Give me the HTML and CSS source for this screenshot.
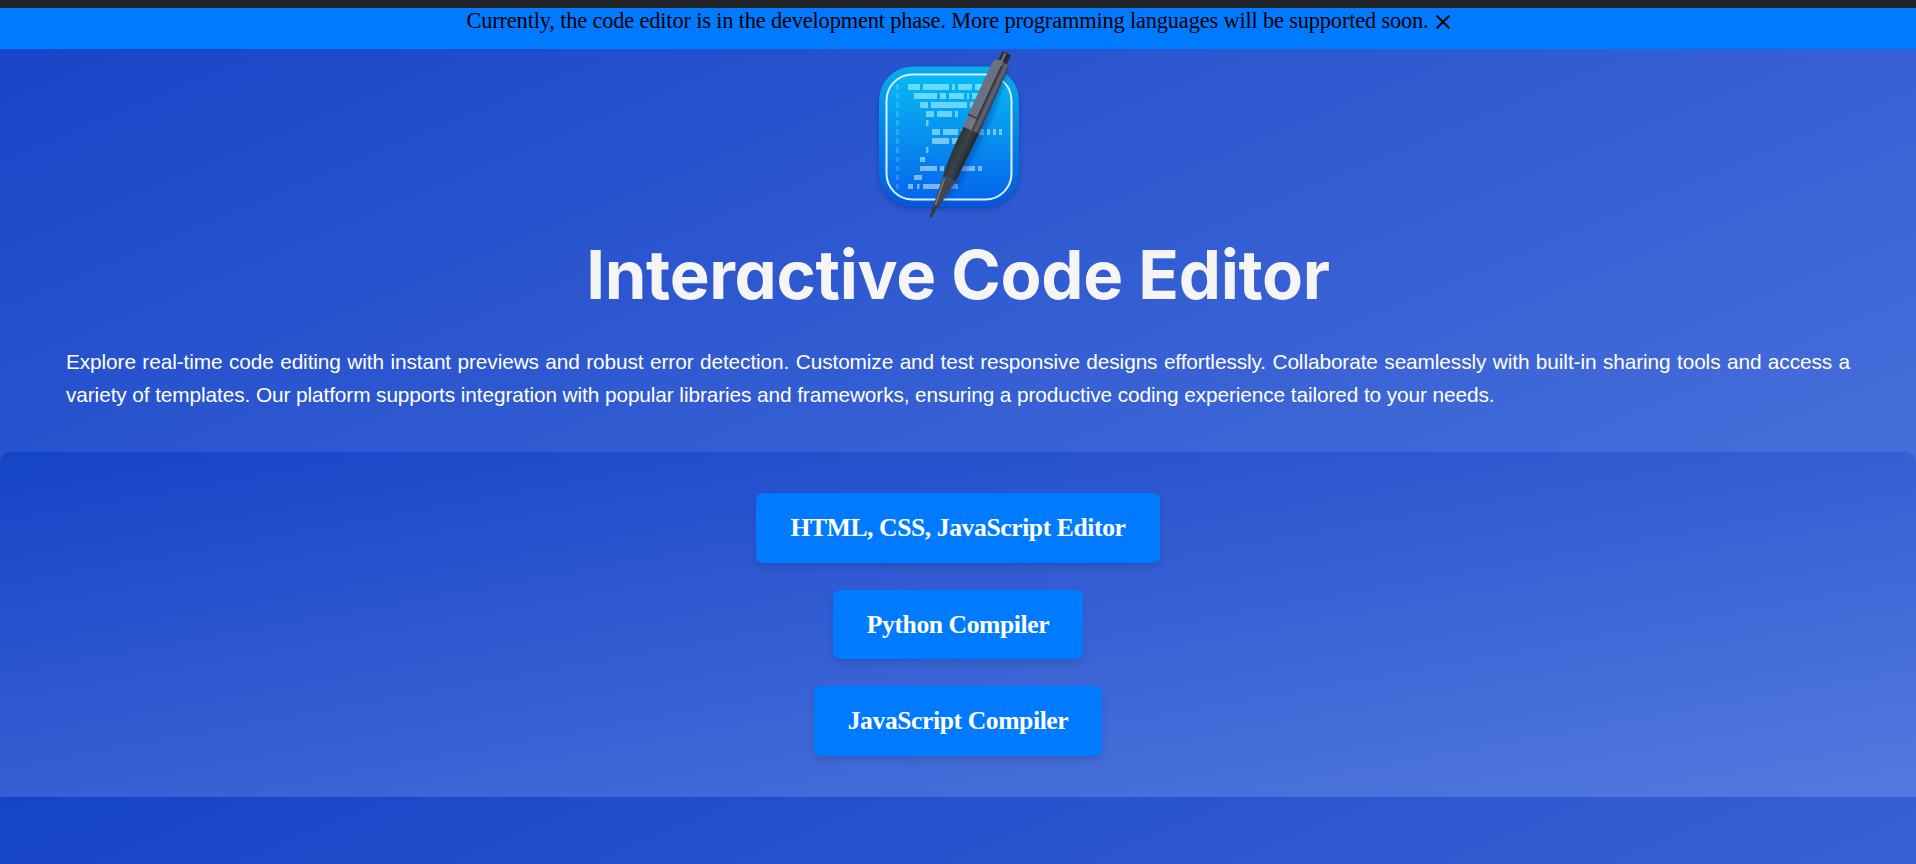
FILE: index.html
```html
<!DOCTYPE html>
<html lang="en">
<head>
<meta charset="utf-8">
<title>Interactive Code Editor</title>
<link rel="stylesheet" href="styles.css">
</head>
<body>
<div class="topbar"></div>
<div class="notice">
  <span class="notice-text">Currently, the code editor is in the development phase. More programming languages will be supported soon.</span>
  <svg class="close" viewBox="0 0 14 14"><path d="M.6.6 13.4 13.4M13.4.6.6 13.4" stroke="#000" stroke-width="2" fill="none"/></svg>
</div>
<header class="hero">
  <svg class="logo" viewBox="0 0 180 190">
    <defs>
      <linearGradient id="tile" x1="0" y1="0" x2="0" y2="1"><stop offset="0" stop-color="#05b9f2"/><stop offset=".45" stop-color="#0795ef"/><stop offset="1" stop-color="#0565ed"/></linearGradient>
      <linearGradient id="rim" x1="0" y1="0" x2="0" y2="1"><stop offset="0" stop-color="#07aeec"/><stop offset="1" stop-color="#0457dc"/></linearGradient>
      <linearGradient id="lines" gradientUnits="userSpaceOnUse" x1="0" y1="44" x2="0" y2="150"><stop offset="0" stop-color="#63defc"/><stop offset="1" stop-color="#78b5fa"/></linearGradient>
      <linearGradient id="metal" x1="0" y1="0" x2="1" y2="0"><stop offset="0" stop-color="#6d6f7e"/><stop offset=".45" stop-color="#777989"/><stop offset=".55" stop-color="#41434e"/><stop offset=".75" stop-color="#656779"/><stop offset="1" stop-color="#31323d"/></linearGradient>
      <linearGradient id="grip" x1="0" y1="0" x2="1" y2="0"><stop offset="0" stop-color="#2b3339"/><stop offset=".5" stop-color="#3c4348"/><stop offset="1" stop-color="#20262d"/></linearGradient>
      <filter id="soft" x="-20%" y="-20%" width="140%" height="140%"><feGaussianBlur stdDeviation="2"/></filter>
      <filter id="fine"><feGaussianBlur stdDeviation=".6"/></filter>
    </defs>
    <rect x="19" y="29" width="140" height="140" rx="34" fill="#173591" opacity=".55" filter="url(#soft)"/>
    <rect x="19" y="26.500" width="140" height="140.500" rx="34" fill="url(#rim)"/>
    <rect x="26.500" y="34.500" width="125" height="125" rx="26" fill="url(#tile)" stroke="#d9f1ff" stroke-width="2"/>
    <g fill="url(#lines)" filter="url(#fine)">
      <path d="M48 44h12v6H48zM63 44h26v6H63zM92 44h3v6h-3zM98 44h14v6H98zM115 44h10v6h-10z"/>
      <path d="M54 53h23v6H54zM80 53h6v6h-6zM89 53h15v6H89zM107 53h2v6h-2zM112 53h10v6h-10z"/>
      <path d="M60 62h8v6h-8zM71 62h36v6H71zM110 62h8v6h-8z"/>
      <path d="M66 71h8v6h-8zM77 71h15v6H77zM95 71h3v6h-3zM66 80h2.500v6H66z"/>
      <path d="M72 89h8v6h-8zM83 89h15v6H83zM101 89h20v6h-20zM120 89h4v6h-4zM127 89h3v6h-3zM133 89h3v6h-3zM139 89h3v6h-3z"/>
      <path d="M72 98h17v6H72zM92 98h8v6h-8zM66 107h2.500v6H66zM60 117h5v5h-5z"/>
      <path d="M60 126h17v5H60zM80 126h4v5h-4zM87 126h28v5H87zM118 126h4v5h-4zM54 135h8v5h-8z"/>
      <path d="M48 144h5v5h-5zM57 144h2.500v5H57zM63 144h20v5H63zM86 144h12v5H86z"/>
      <path opacity=".35" d="M36 44h3v6h-3zM36 53h3v6h-3zM36 62h3v6h-3zM36 71h3v6h-3zM36 80h3v6h-3zM36 89h3v6h-3zM36 98h3v6h-3zM36 107h3v6h-3zM36 117h3v5h-3zM36 126h3v5h-3zM36 135h3v5h-3zM36 144h3v5h-3z"/>
    </g>
    <path d="M149 30 130 82 100 145 78 166 88 138 132 40z" fill="#06389b" opacity=".4" filter="url(#soft)"/>
    <g transform="translate(147 12) rotate(24.900)">
      <rect x="-4.500" y="1" width="9.500" height="13" rx="2" fill="#292b32"/>
      <path d="M-1 2v11" stroke="#777a86" stroke-width="2"/>
      <path d="M-8 12Q0 8 8 13L9 88H-8z" fill="url(#metal)"/>
      <path d="M-9 14Q-4 8 1 12V73H-9z" fill="#6d7080"/>
      <path d="M-9 73H1V15" fill="none" stroke="#32343e" stroke-width="1.400"/>
      <path d="M-8 86H9L8 139H-6Q-9 118-8 86z" fill="url(#grip)"/>
      <path d="M-6 138Q1 142 8 138L3 171H-2z" fill="#42464c"/>
      <path d="M-3.500 141-.5 169" stroke="#73767b" stroke-width="1.600"/>
      <path d="M-2.500 169h5L1.500 182H-1z" fill="#373b44"/>
    </g>
  </svg>
  <h1 class="title">Interactive Code Editor</h1>
  <p class="intro">Explore real-time code editing with instant previews and robust error detection. Customize and test responsive designs effortlessly. Collaborate seamlessly with built-in sharing tools and access a variety of templates. Our platform supports integration with popular libraries and frameworks, ensuring a productive coding experience tailored to your needs.</p>
</header>
<main class="editors">
  <a class="editor-link">HTML, CSS, JavaScript Editor</a>
  <a class="editor-link">Python Compiler</a>
  <a class="editor-link">JavaScript Compiler</a>
</main>
</body>
</html>
```
FILE: styles.css
```css
html {
  height: 797px;
  background: linear-gradient(to bottom right, #1644c7, #547adf);
}
body {
  margin: 0;
  font-family: "Liberation Serif", "Times New Roman", serif;
}
.topbar {
  height: 8px;
  background: #212529;
}
.notice {
  display: flex;
  justify-content: center;
  height: 41px;
  background: #007bff;
  color: #000;
  font-size: 22.400px;
  line-height: 26px;
}
.notice-text {
  letter-spacing: -.167px;
  white-space: nowrap;
}
.close {
  width: 14px;
  height: 14px;
  margin: 7px 0 0 7px;
}
.hero {
  display: flex;
  flex-direction: column;
  align-items: center;
  height: 403px;
}
.logo {
  width: 180px;
  height: 190px;
  margin: -9px 16px 0 0;
  flex: none;
}
.title {
  margin: 0;
  font: 700 67px/90px Inter, sans-serif;
  font-feature-settings: "cv11";
  letter-spacing: -.330px;
  color: #f5f5f5;
  white-space: nowrap;
}
.intro {
  width: 1784px;
  margin: 25px 0 0;
  font: 20.800px/33px "Liberation Sans", Arial, sans-serif;
  letter-spacing: -.090px;
  color: #fff;
  text-align: justify;
}
.editors {
  display: flex;
  flex-direction: column;
  align-items: center;
  gap: 27px;
  box-sizing: border-box;
  height: 345px;
  padding-top: 41px;
  border-radius: 10px 10px 0 0;
  background: linear-gradient(to bottom right, #1644c7, #547adf);
}
.editor-link {
  padding: 0 34px;
  border-radius: 7px;
  background: #007bff;
  box-shadow: 0 4px 6px rgba(0, 0, 0, .12);
  color: #fff;
  font-size: 25.600px;
  font-weight: 700;
  letter-spacing: -.400px;
  line-height: 69.500px;
}
```
